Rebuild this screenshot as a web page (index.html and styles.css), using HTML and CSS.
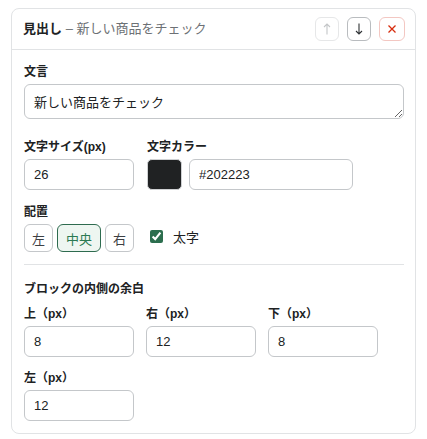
FILE: index.html
```html
<!DOCTYPE html>
<html lang="ja">
<head>
<meta charset="utf-8">
<title>見出し</title>
<link rel="stylesheet" href="styles.css">
</head>
<body>
<div class="card">
  <div class="card-head">
    <div class="title"><strong>見出し</strong><span class="sub"> – 新しい商品をチェック</span></div>
    <div class="actions">
      <button class="icon-btn disabled" type="button" aria-label="上へ">
        <svg width="10" height="12" viewBox="0 0 10 12"><path d="M5 11.5V1M2 4L5 1L8 4" fill="none" stroke="currentColor" stroke-width="1.1"/></svg>
      </button>
      <button class="icon-btn" type="button" aria-label="下へ">
        <svg width="10" height="12" viewBox="0 0 10 12"><path d="M5 0.5V11M2 8L5 11L8 8" fill="none" stroke="currentColor" stroke-width="1.1"/></svg>
      </button>
      <button class="icon-btn danger" type="button" aria-label="削除">
        <svg width="10" height="10" viewBox="0 0 10 10"><path d="M1.5 1.5L8.5 8.5M8.5 1.5L1.5 8.5" fill="none" stroke="currentColor" stroke-width="1.3"/></svg>
      </button>
    </div>
  </div>
  <div class="card-body">
    <div class="field field-text">
      <label class="label">文言</label>
      <textarea class="textarea" rows="1">新しい商品をチェック</textarea>
    </div>

    <div class="row-two">
      <div class="field">
        <label class="label">文字サイズ(px)</label>
        <input class="input" type="text" value="26">
      </div>
      <div class="field">
        <label class="label">文字カラー</label>
        <div class="color-row">
          <span class="swatch"></span>
          <input class="input hex" type="text" value="#202223">
        </div>
      </div>
    </div>

    <div class="field field-align">
      <label class="label">配置</label>
      <div class="align-row">
        <div class="seg">
          <button class="seg-btn" type="button">左</button>
          <button class="seg-btn active" type="button">中央</button>
          <button class="seg-btn" type="button">右</button>
        </div>
        <label class="check"><input type="checkbox" checked> 太字</label>
      </div>
    </div>

    <hr class="divider">

    <div class="label heading">ブロックの内側の余白</div>
    <div class="pad-grid">
      <div class="field">
        <label class="label">上（px）</label>
        <input class="input" type="text" value="8">
      </div>
      <div class="field">
        <label class="label">右（px）</label>
        <input class="input" type="text" value="12">
      </div>
      <div class="field">
        <label class="label">下（px）</label>
        <input class="input" type="text" value="8">
      </div>
      <div class="field">
        <label class="label">左（px）</label>
        <input class="input" type="text" value="12">
      </div>
    </div>
  </div>
</div>
</body>
</html>
```

FILE: styles.css
```css
* { box-sizing: border-box; }

html, body {
  margin: 0;
  background: #ffffff;
}

body {
  padding: 8px 11px 0 11px;
  font-family: "Liberation Sans", "Noto Sans CJK JP", sans-serif;
  color: #202223;
  font-size: 13px;
}

.card {
  width: 405px;
  border: 1px solid #e1e3e5;
  border-radius: 8px;
  background: #fff;
}

.card-head {
  height: 41px;
  display: flex;
  align-items: center;
  justify-content: space-between;
  padding: 0 10px 0 11px;
  border-bottom: 1px solid #e1e3e5;
}

.title {
  font-size: 13px;
  line-height: 18px;
}

.title strong {
  font-weight: 700;
  color: #202223;
}

.title .sub {
  color: #6d7175;
}

.actions {
  display: flex;
  gap: 8px;
}

.icon-btn {
  width: 24px;
  height: 24px;
  padding: 0;
  border: 1px solid #b9bcbf;
  border-radius: 6px;
  background: #fff;
  color: #303336;
  display: flex;
  align-items: center;
  justify-content: center;
}

.icon-btn svg {
  display: block;
}

.icon-btn.disabled {
  border-color: #e6e7e8;
  color: #c4c6c8;
}

.icon-btn.danger {
  width: 26px;
  border-color: #f3c7c2;
  color: #d72c0d;
}

.card-body {
  padding: 14px 11px 12px 12px;
}

.label {
  display: block;
  font-size: 12px;
  line-height: 16px;
  font-weight: 700;
  color: #202223;
  margin-bottom: 4px;
}

.field {
  margin-bottom: 14px;
}

.field-text {
  margin-bottom: 20px;
}

.field-align {
  margin-bottom: 12px;
}

.textarea {
  display: block;
  width: 380px;
  height: 35px;
  padding: 8px 10px 8px 9px;
  border: 1px solid #c4c7ca;
  border-radius: 6px;
  font-family: "Noto Sans CJK JP", sans-serif;
  font-size: 13px;
  line-height: 17px;
  color: #202223;
  resize: vertical;
  overflow: hidden;
}

.row-two {
  display: flex;
  gap: 13px;
}

.input {
  display: block;
  width: 110px;
  height: 31px;
  padding: 0 9px;
  border: 1px solid #c4c7ca;
  border-radius: 6px;
  font-family: "Liberation Sans", "Noto Sans CJK JP", sans-serif;
  font-size: 13px;
  color: #202223;
  background: #fff;
}

.color-row {
  display: flex;
  gap: 7px;
}

.swatch {
  display: block;
  width: 35px;
  height: 31px;
  border-radius: 5px;
  background: #202223;
  border: 1px solid #cfd1d3;
}

.input.hex {
  width: 164px;
}

.align-row {
  display: flex;
  align-items: center;
  gap: 16px;
}

.seg {
  display: flex;
  gap: 4px;
}

.seg-btn {
  height: 28px;
  padding: 0 7px;
  border: 1px solid #c4c7ca;
  border-radius: 6px;
  background: #fff;
  font-family: "Noto Sans CJK JP", sans-serif;
  font-size: 13px;
  color: #3d4043;
}

.seg-btn.active {
  border-color: #2e6b4f;
  background: #eef6f1;
  color: #2a7a52;
  padding: 0 8px;
}

.check {
  display: flex;
  align-items: center;
  gap: 10px;
  font-size: 13px;
  color: #202223;
  margin-top: -4px;
}

.check input {
  margin: 0;
  width: 13px;
  height: 13px;
  accent-color: #2c6e4e;
}

.divider {
  border: 0;
  border-top: 1px solid #e1e3e5;
  margin: 0 0 16px 0;
}

.heading {
  margin-bottom: 9px;
}

.pad-grid {
  display: grid;
  grid-template-columns: repeat(3, 110px);
  column-gap: 12px;
  row-gap: 13px;
}

.pad-grid .field {
  margin-bottom: 0;
}
```
